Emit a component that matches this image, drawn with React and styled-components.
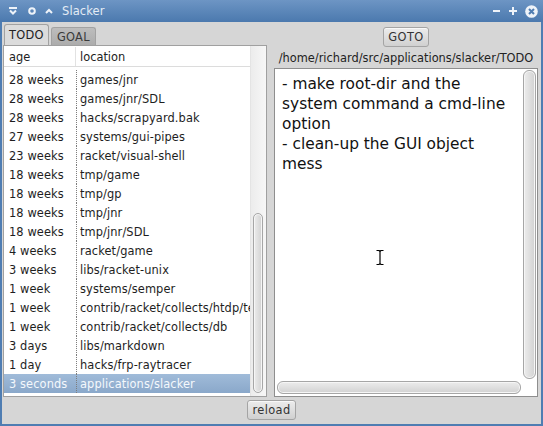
import React from 'react';
import styled, { createGlobalStyle } from 'styled-components';

const GlobalStyle = createGlobalStyle`
  html, body {
    margin: 0;
    padding: 0;
    background: #d6d6d6;
  }
  body {
    font-family: "DejaVu Sans", "Liberation Sans", sans-serif;
    font-size: 11.4px;
    color: #262626;
  }
  * {
    box-sizing: border-box;
  }
`;

const Window = styled.div`
  width: 543px;
  height: 426px;
  display: flex;
  flex-direction: column;
  background: #4f7db2;
`;

const TitleBar = styled.div`
  height: 22px;
  flex-shrink: 0;
  display: flex;
  align-items: center;
  padding: 0 5px 0 9px;
  background: linear-gradient(to bottom, #6d95c4, #4b79ae);
  color: #e8eef6;
`;

const TitleIcon = styled.svg`
  display: block;
  flex-shrink: 0;
  margin-right: ${({ $gap }) => $gap || 0}px;
`;

const Title = styled.span`
  flex: 1;
  font-size: 11.5px;
  color: #e4ecf5;
  letter-spacing: 0.1px;
`;

const Body = styled.div`
  flex: 1;
  margin: 0 2px 2px;
  background: #d6d6d6;
  display: flex;
  flex-direction: column;
  min-height: 0;
`;

const Main = styled.div`
  height: 375px;
  display: flex;
  gap: 6px;
  padding: 1px 2px 0 1px;
`;

const LeftColumn = styled.div`
  width: 264px;
  flex-shrink: 0;
  display: flex;
  flex-direction: column;
  min-width: 0;
`;

const TabBar = styled.div`
  height: 22px;
  display: flex;
  align-items: flex-end;
  gap: 2px;
  padding-left: 1px;
`;

const Tab = styled.div`
  height: ${({ $active }) => ($active ? 21 : 18)}px;
  padding: 0 ${({ $active }) => ($active ? 4 : 5)}px;
  display: flex;
  align-items: center;
  border: 1px solid #a2a2a2;
  border-bottom: none;
  border-radius: 3px 3px 0 0;
  background: ${({ $active }) =>
    $active ? '#dcdcdc' : 'linear-gradient(to bottom, #bdbdbd, #acacac)'};
  color: ${({ $active }) => ($active ? '#222' : '#3a3a3a')};
  letter-spacing: 0.3px;
`;

const ListBox = styled.div`
  flex: 1;
  display: flex;
  border: 1px solid #a0a0a0;
  background: #ffffff;
  min-height: 0;
  overflow: hidden;
`;

const ListMain = styled.div`
  flex: 1;
  min-width: 0;
  display: flex;
  flex-direction: column;
  overflow: hidden;
`;

const ListHeader = styled.div`
  height: 21px;
  margin-top: 1px;
  display: flex;
  align-items: center;
  border-bottom: 1px solid #dcdcdc;
`;

const HeaderCell = styled.div`
  width: ${({ $width }) => ($width ? `${$width}px` : 'auto')};
  flex: ${({ $width }) => ($width ? 'none' : 1)};
  height: 100%;
  display: flex;
  align-items: center;
  padding-left: ${({ $first }) => ($first ? 5 : 4)}px;
  border-left: ${({ $first }) => ($first ? 'none' : '1px solid #e2e2e2')};
  color: #222;
`;

const Rows = styled.div`
  padding: 3px 0;
`;

const Row = styled.div`
  height: 19px;
  display: flex;
  align-items: center;
  background: ${({ $selected }) =>
    $selected ? 'linear-gradient(to bottom, #a0bbd9, #8aa8ca)' : 'transparent'};
  color: ${({ $selected }) => ($selected ? '#f4f8fc' : '#1e1e1e')};
`;

const Cell = styled.div`
  width: ${({ $width }) => ($width ? `${$width}px` : 'auto')};
  flex: ${({ $width }) => ($width ? 'none' : 1)};
  min-width: 0;
  height: 100%;
  display: flex;
  align-items: center;
  padding-left: ${({ $first }) => ($first ? 5 : 3)}px;
  border-left: ${({ $first }) => ($first ? 'none' : '1px dotted #7d7d7d')};
  white-space: nowrap;
  overflow: hidden;
  letter-spacing: 0.1px;
`;

const VTrack = styled.div`
  width: 16px;
  flex-shrink: 0;
  display: flex;
  flex-direction: column;
  justify-content: flex-end;
  align-items: center;
  padding: 0 1px 3px 0;
  background: linear-gradient(to right, #ececec, #f7f7f7);
  border-left: 1px solid #e4e4e4;
`;

const Thumb = styled.div`
  width: ${({ $w }) => ($w ? `${$w}px` : '100%')};
  height: ${({ $h }) => ($h ? `${$h}px` : '100%')};
  border: 1px solid #a6a6a6;
  border-radius: 6px;
  background: ${({ $horizontal }) =>
    $horizontal
      ? 'linear-gradient(to bottom, #ececec, #d2d2d2)'
      : 'linear-gradient(to right, #ececec, #d2d2d2)'};
  box-shadow: inset 0 0 0 1px #f6f6f6;
`;

const RightColumn = styled.div`
  flex: 1;
  display: flex;
  flex-direction: column;
  align-items: center;
  min-width: 0;
`;

const Button = styled.button`
  height: 20px;
  padding: 0 4px;
  margin-top: ${({ $top }) => $top || 0}px;
  font-family: "DejaVu Sans", "Liberation Sans", sans-serif;
  font-size: 11.4px;
  color: #333;
  letter-spacing: 0.4px;
  border: 1px solid #a4a4a4;
  border-radius: 3px;
  background: linear-gradient(to bottom, #ececec, #d0d0d0);
  box-shadow: inset 0 1px 0 #f8f8f8;
  line-height: 18px;
`;

const PathLabel = styled.div`
  margin-top: 4px;
  line-height: 15px;
  height: 15px;
  white-space: nowrap;
  color: #222;
`;

const Editor = styled.div`
  position: relative;
  align-self: stretch;
  flex: 1;
  margin: 2px 1px 0 1px;
  border: 1px solid #8e8e8e;
  background: #ffffff;
  display: flex;
  flex-direction: column;
  padding: 1px;
  min-height: 0;
`;

const EditorMain = styled.div`
  flex: 1;
  display: flex;
  min-height: 0;
`;

const EditorText = styled.div`
  flex: 1;
  padding: 4px 0 0 6px;
  font-size: 15.4px;
  line-height: 20px;
  color: #111;
`;

const VBar = styled.div`
  width: 13px;
  padding-bottom: 1px;
  display: flex;
`;

const HBar = styled.div`
  height: 15px;
  padding: 1px 15px 1px 1px;
  display: flex;
`;

const Cursor = styled.svg`
  position: absolute;
  left: 101px;
  top: 181px;
`;

const Bottom = styled.div`
  flex: 1;
  display: flex;
  justify-content: center;
  align-items: flex-start;
  padding-top: 3px;
`;

const rows = [
  ['28 weeks', 'games/jnr'],
  ['28 weeks', 'games/jnr/SDL'],
  ['28 weeks', 'hacks/scrapyard.bak'],
  ['27 weeks', 'systems/gui-pipes'],
  ['23 weeks', 'racket/visual-shell'],
  ['18 weeks', 'tmp/game'],
  ['18 weeks', 'tmp/gp'],
  ['18 weeks', 'tmp/jnr'],
  ['18 weeks', 'tmp/jnr/SDL'],
  ['4 weeks', 'racket/game'],
  ['3 weeks', 'libs/racket-unix'],
  ['1 week', 'systems/semper'],
  ['1 week', 'contrib/racket/collects/htdp/tests'],
  ['1 week', 'contrib/racket/collects/db'],
  ['3 days', 'libs/markdown'],
  ['1 day', 'hacks/frp-raytracer'],
  ['3 seconds', 'applications/slacker'],
];

const todoLines = [
  '- make root-dir and the',
  'system command a cmd-line',
  'option',
  '- clean-up the GUI object',
  'mess',
];

const App = () => {
  return (
    <>
      <GlobalStyle />
      <Window>
        <TitleBar>
          <TitleIcon width="8" height="8" viewBox="0 0 8 8" $gap={11}>
            <path d="M0 1h8" stroke="#eef3f9" strokeWidth="2" />
            <path d="M1 3.5l3 3 3-3" stroke="#eef3f9" strokeWidth="2" fill="none" />
          </TitleIcon>
          <TitleIcon width="8" height="8" viewBox="0 0 8 8" $gap={9}>
            <circle cx="4" cy="4" r="2.8" stroke="#eef3f9" strokeWidth="2" fill="none" />
          </TitleIcon>
          <TitleIcon width="8" height="6" viewBox="0 0 8 6" $gap={9}>
            <path d="M1 5l3-3 3 3" stroke="#eef3f9" strokeWidth="2" fill="none" />
          </TitleIcon>
          <Title>Slacker</Title>
          <TitleIcon width="7" height="8" viewBox="0 0 7 8" $gap={9}>
            <path d="M0 4h7" stroke="#eef3f9" strokeWidth="2" />
          </TitleIcon>
          <TitleIcon width="8" height="8" viewBox="0 0 8 8" $gap={8}>
            <path d="M0 4h8M4 0v8" stroke="#eef3f9" strokeWidth="2" />
          </TitleIcon>
          <TitleIcon width="13" height="13" viewBox="0 0 13 13">
            <circle cx="6.5" cy="6.5" r="6.3" fill="#eef3f9" />
            <path d="M4 4l5 5M9 4l-5 5" stroke="#4f7db2" strokeWidth="2" />
          </TitleIcon>
        </TitleBar>
        <Body>
          <Main>
            <LeftColumn>
              <TabBar>
                <Tab $active>TODO</Tab>
                <Tab>GOAL</Tab>
              </TabBar>
              <ListBox>
                <ListMain>
                  <ListHeader>
                    <HeaderCell $first $width={71}>age</HeaderCell>
                    <HeaderCell>location</HeaderCell>
                  </ListHeader>
                  <Rows>
                    {rows.map(([age, location], i) => (
                      <Row key={location} $selected={i === rows.length - 1}>
                        <Cell $first $width={72}>{age}</Cell>
                        <Cell>{location}</Cell>
                      </Row>
                    ))}
                  </Rows>
                </ListMain>
                <VTrack>
                  <Thumb $w={10} $h={180} />
                </VTrack>
              </ListBox>
            </LeftColumn>
            <RightColumn>
              <Button $top={4}>GOTO</Button>
              <PathLabel>/home/richard/src/applications/slacker/TODO</PathLabel>
              <Editor>
                <EditorMain>
                  <EditorText>
                    {todoLines.map((line) => (
                      <div key={line}>{line}</div>
                    ))}
                  </EditorText>
                  <VBar>
                    <Thumb />
                  </VBar>
                </EditorMain>
                <HBar>
                  <Thumb $horizontal />
                </HBar>
                <Cursor width="8" height="15" viewBox="0 0 8 15">
                  <path d="M0.5 0.5h2.5l1 1 1-1h2.5M4 1.5v12M0.5 14.5h2.5l1-1 1 1h2.5" stroke="#000" strokeWidth="1.2" fill="none" />
                </Cursor>
              </Editor>
            </RightColumn>
          </Main>
          <Bottom>
            <Button>reload</Button>
          </Bottom>
        </Body>
      </Window>
    </>
  );
};

export default App;
